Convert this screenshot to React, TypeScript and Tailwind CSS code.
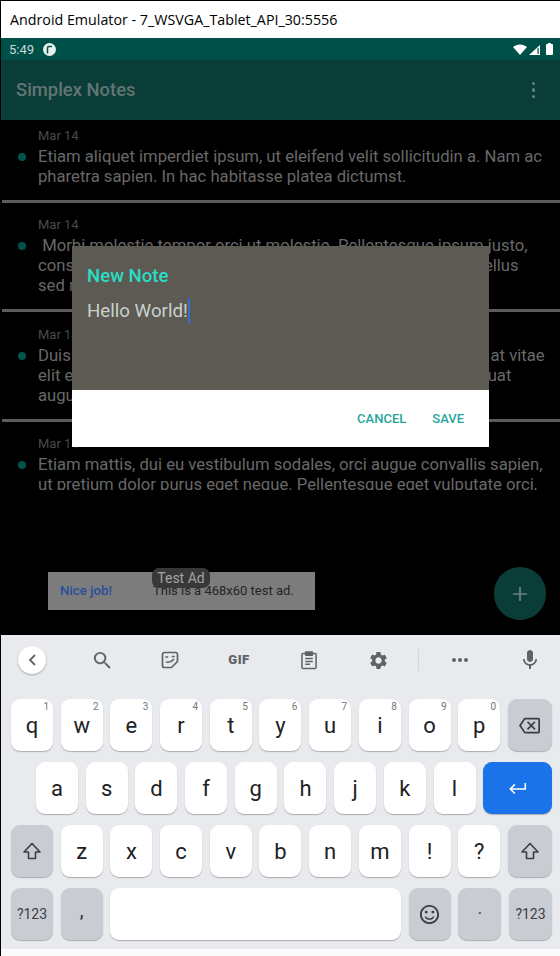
import React from 'react';
import { MdMic, MdOutlineBackspace, MdOutlineSentimentSatisfied, MdSearch, MdSettings } from 'react-icons/md';

const notes = [
  {
    top: 'pt-[9px]',
    gap: 'mt-[13px]',
    lines: [
      'Etiam aliquet imperdiet ipsum, ut eleifend velit sollicitudin a. Nam ac',
      'pharetra sapien. In hac habitasse platea dictumst.',
    ],
  },
  {
    top: 'pt-[15px]',
    gap: 'mt-[13px]',
    lines: [
      '\u00a0Morbi molestie tempor orci ut molestie. Pellentesque ipsum justo,',
      'consectetur vitae lacus vitae, fringilla aliquet nisi amet. Phasellus',
      'sed magna.',
    ],
  },
  {
    top: 'pt-[16px]',
    gap: 'mt-[13px]',
    lines: [
      'Duis sed lorem tincidunt, fermentum nisl, volutpat erat sed ut at vitae',
      'elit eget, finibus ante. Praesent non mauris sed erat a consequat',
      'augue.',
    ],
  },
  {
    top: 'pt-[15px]',
    gap: 'mt-[14px]',
    lines: [
      'Etiam mattis, dui eu vestibulum sodales, orci augue convallis sapien,',
      'ut pretium dolor purus eget neque. Pellentesque eget vulputate orci,',
    ],
  },
];

const row1 = [
  ['q', '1'], ['w', '2'], ['e', '3'], ['r', '4'], ['t', '5'],
  ['y', '6'], ['u', '7'], ['i', '8'], ['o', '9'], ['p', '0'],
];
const row2 = ['a', 's', 'd', 'f', 'g', 'h', 'j', 'k', 'l'];
const row3 = ['z', 'x', 'c', 'v', 'b', 'n', 'm', '!', '?'];

const keyBase =
  'relative flex h-[52px] items-center justify-center rounded-[9px] shadow-[0_1px_1px_rgba(60,64,67,0.35)]';

function Key({ label, hint }: { label: string; hint?: string }) {
  return (
    <div className={`${keyBase} w-[42px] shrink-0 bg-white text-[22px] text-[#202124]`}>
      {label}
      {hint && (
        <span className="absolute right-[4px] top-[1px] text-[10px] leading-[14px] text-[#70757a]">{hint}</span>
      )}
    </div>
  );
}

function GrayKey({ children, size = 'w-[42px] shrink-0' }: { children: React.ReactNode; size?: string }) {
  return <div className={`${keyBase} ${size} bg-[#c9ccd2] text-[#3c4043]`}>{children}</div>;
}

function ShiftIcon() {
  return (
    <svg width="20" height="20" viewBox="0 0 20 20" fill="none" stroke="#3c4043" strokeWidth="1.6" strokeLinejoin="round">
      <path d="M10 2.500 2 11h4.500v6.500h7V11H18z" />
    </svg>
  );
}

function StickerIcon() {
  return (
    <svg width="18" height="18" viewBox="0 0 18 18" fill="none" stroke="#5f6368" strokeWidth="1.7" strokeLinecap="round" strokeLinejoin="round">
      <path d="M3.500 1.500h11a2 2 0 0 1 2 2v7l-6 6h-7a2 2 0 0 1-2-2v-11a2 2 0 0 1 2-2z" />
      <path d="M5 6h1.500M11.500 5.500h1.500M5.500 11c2.500.7 5-.2 7-2.500" />
    </svg>
  );
}

function ClipboardIcon() {
  return (
    <svg width="16" height="20" viewBox="0 0 17 20" fill="none" stroke="#5f6368" strokeWidth="1.6" strokeLinejoin="round">
      <path d="M5 3H2a1 1 0 0 0-1 1v14a1 1 0 0 0 1 1h13a1 1 0 0 0 1-1V4a1 1 0 0 0-1-1h-3" />
      <path d="M5 1.500h7V5H5z" fill="#5f6368" />
      <path d="M4.500 8.500h8M4.500 11.500h8M4.500 14.500h5" />
    </svg>
  );
}

function Toolbar() {
  return (
    <div className="flex h-[64px] items-start">
      <div className="ml-[17px] mt-[11px] flex h-[28px] w-[28px] items-center justify-center rounded-full bg-white shadow-[0_1px_2px_rgba(60,64,67,0.4)]">
        <svg width="10" height="14" viewBox="0 0 10 14" fill="none" stroke="#5f6368" strokeWidth="1.8">
          <path d="M8 2 3 7l5 5" />
        </svg>
      </div>
      <div className="mt-[11px] flex h-[28px] items-center text-[#5f6368]">
        <div className="ml-[42px] flex w-[28px] justify-center"><MdSearch size={23} /></div>
        <div className="ml-[40px] flex w-[28px] justify-center"><StickerIcon /></div>
        <div className="ml-[41px] w-[28px] text-center font-['Roboto',sans-serif] text-[13px] font-black tracking-[0.5px]">GIF</div>
        <div className="ml-[42px] flex w-[28px] justify-center"><ClipboardIcon /></div>
        <div className="ml-[41px] flex w-[28px] justify-center"><MdSettings size={21} /></div>
        <div className="ml-[26px] h-[22px] w-px bg-[#d5d7db]" />
        <div className="ml-[27px] flex w-[28px] justify-center gap-[2px]">
          <span className="h-[4px] w-[4px] rounded-full bg-[#5f6368]" />
          <span className="h-[4px] w-[4px] rounded-full bg-[#5f6368]" />
          <span className="h-[4px] w-[4px] rounded-full bg-[#5f6368]" />
        </div>
        <div className="ml-[42px] flex w-[28px] justify-center"><MdMic size={24} /></div>
      </div>
    </div>
  );
}

function Keyboard() {
  return (
    <div className="flex h-[314px] flex-col bg-[#e8eaed] font-['Roboto',sans-serif]">
      <Toolbar />
      <div className="flex flex-col gap-[11px] pl-[10px] pr-[8px]">
        <div className="flex gap-[7.700px]">
          {row1.map(([k, n]) => <Key key={k} label={k} hint={n} />)}
          <GrayKey size="flex-1"><MdOutlineBackspace size={21} className="text-[#3c4043]" /></GrayKey>
        </div>
        <div className="flex gap-[7.700px] pl-[25px]">
          {row2.map((k) => <Key key={k} label={k} />)}
          <div className={`${keyBase} flex-1 bg-[#1a73e8]`}>
            <svg width="20" height="13" viewBox="0 0 22 14" fill="none" stroke="#ffffff" strokeWidth="1.700">
              <path d="M19 1v6.500H3M7.500 2.500 2.500 7.500l5 5" />
            </svg>
          </div>
        </div>
        <div className="flex gap-[7.700px]">
          <GrayKey><ShiftIcon /></GrayKey>
          {row3.map((k) => <Key key={k} label={k} />)}
          <GrayKey size="flex-1"><ShiftIcon /></GrayKey>
        </div>
        <div className="flex gap-[7.700px]">
          <GrayKey><span className="text-[14px]">?123</span></GrayKey>
          <GrayKey><span className="pb-[4px] text-[16px] font-bold">,</span></GrayKey>
          <div className={`${keyBase} flex-1 bg-white`} />
          <GrayKey><MdOutlineSentimentSatisfied size={23} /></GrayKey>
          <GrayKey size="w-[43px] shrink-0"><span className="pb-[8px] text-[13px] font-bold">.</span></GrayKey>
          <GrayKey size="w-[43px] shrink-0"><span className="text-[14px]">?123</span></GrayKey>
        </div>
      </div>
    </div>
  );
}

function StatusBar() {
  return (
    <div className="flex h-[22px] items-center justify-between bg-[#00504a] pl-[8px] pr-[5px]">
      <div className="flex items-center gap-[9px] pt-[1px]">
        <span className="text-[13px] text-[#c8d9d6]">5:49</span>
        <svg width="13" height="13" viewBox="0 0 13 13" fill="none">
          <circle cx="6.500" cy="6.500" r="6.500" fill="#e8f0ee" />
          <path d="M4.500 10.500V5A1.500 1.500 0 0 1 6 3.500h3" stroke="#00504a" strokeWidth="1.500" />
        </svg>
      </div>
      <svg width="42" height="14" viewBox="0 0 42 14">
        <path d="M0 5C4 1.500 10 1.500 14 5L7 13z" fill="#ffffff" />
        <path d="M16 13 27 3v10z" fill="#ffffff" />
        <path d="M24.500 6h1.200v6h-1.200z" fill="#00504a" />
        <rect x="33" y="2" width="7" height="11" rx="1" fill="#ffffff" />
        <rect x="35" y="1" width="3" height="2" fill="#ffffff" />
      </svg>
    </div>
  );
}

function NoteList() {
  return (
    <div className="h-[370px] overflow-hidden">
      {notes.map((note, i) => (
        <div key={i} className={note.top}>
          <div className="pl-[37px] text-[13px] leading-[14px] text-[#4a4a4a]">Mar 14</div>
          <div className="mt-[4px] flex items-start pl-[17px]">
            <span className="mt-[6px] h-[8px] w-[8px] shrink-0 rounded-full bg-[#00544d]" />
            <div className="ml-[12px] whitespace-nowrap text-[16.670px] leading-[20px] text-[#686868]">
              {note.lines.map((l) => <div key={l}>{l}</div>)}
            </div>
          </div>
          <div className={`ml-[1px] h-[3px] bg-[#5c5c5c] ${note.gap}`} />
        </div>
      ))}
    </div>
  );
}

export default function App() {
  return (
    <div className="flex h-[956px] w-[560px] flex-col overflow-hidden border-l border-t border-black bg-black font-['Roboto',sans-serif]">
      <div className="flex h-[37px] items-center bg-white pl-[9px] font-['Open_Sans',sans-serif] text-[14.280px] text-black">
        Android Emulator - 7_WSVGA_Tablet_API_30:5556
      </div>
      <StatusBar />
      <div className="flex h-[60px] items-center justify-between bg-[#0a3d38] pl-[15px] pr-[25px]">
        <span className="text-[18.400px] font-medium text-[#627573]">Simplex Notes</span>
        <div className="flex flex-col gap-[3px]">
          <span className="h-[3.500px] w-[3.500px] rounded-full bg-[#6f7f7d]" />
          <span className="h-[3.500px] w-[3.500px] rounded-full bg-[#6f7f7d]" />
          <span className="h-[3.500px] w-[3.500px] rounded-full bg-[#6f7f7d]" />
        </div>
      </div>

      <div className="relative h-[515px] shrink-0">
        <NoteList />

        {/* dialog over the list */}
        <div className="absolute left-[71px] top-[126px] flex h-[201px] w-[417px] flex-col shadow-md">
          <div className="flex h-[144px] flex-col bg-[#5c5a52] pl-[15px]">
            <div className="mt-[18px] text-[18.600px] font-medium leading-[24px] text-[#2bdcc6]">New Note</div>
            <div className="mt-[10px] flex h-[26px] items-center text-[18.700px] text-[#c9d0ce]">
              Hello World!
              <span className="h-[26px] w-[2px] bg-[#2f6fd0]" />
            </div>
          </div>
          <div className="flex flex-1 items-center justify-end gap-[26px] bg-white pr-[25px] pt-[1px] text-[13px] font-medium text-[#26a69a]">
            <span>CANCEL</span>
            <span>SAVE</span>
          </div>
        </div>

        {/* test ad banner */}
        <div className="absolute left-[47px] top-[452px] flex h-[38px] w-[267px] items-center bg-[#7c7c7c] text-[13px]">
          <span className="ml-[12px] w-[93px] text-[13.300px] font-medium text-[#28509c]">Nice job!</span>
          <span className="text-[#242424]">This is a 468x60 test ad.</span>
        </div>
        <div className="absolute left-[151px] top-[448px] flex h-[20px] w-[58px] items-center justify-center rounded-[7px] bg-[#383838] text-[14px] text-[#a3a3a3]">
          Test Ad
        </div>

        <div className="absolute left-[493px] top-[447px] flex h-[53px] w-[52px] items-center justify-center rounded-full bg-[#0a3d38]">
          <svg width="14" height="14" viewBox="0 0 14 14" stroke="#6c8481" strokeWidth="1.700">
            <path d="M7 0v14M0 7h14" />
          </svg>
        </div>
      </div>

      <Keyboard />
      <div className="flex-1 bg-[#fafafa]" />
    </div>
  );
}
